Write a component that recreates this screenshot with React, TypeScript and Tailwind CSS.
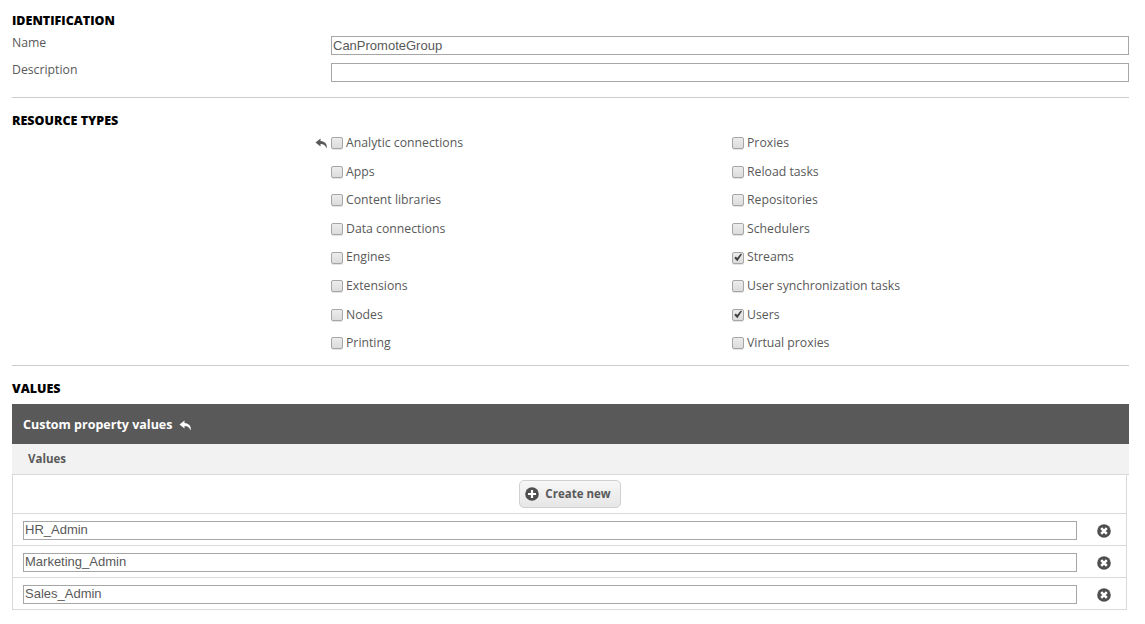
const FONT = "font-['Open_Sans',sans-serif]";

const leftTypes = [
  { label: "Analytic connections", checked: false, undo: true },
  { label: "Apps", checked: false },
  { label: "Content libraries", checked: false },
  { label: "Data connections", checked: false },
  { label: "Engines", checked: false },
  { label: "Extensions", checked: false },
  { label: "Nodes", checked: false },
  { label: "Printing", checked: false },
];

const rightTypes = [
  { label: "Proxies", checked: false },
  { label: "Reload tasks", checked: false },
  { label: "Repositories", checked: false },
  { label: "Schedulers", checked: false },
  { label: "Streams", checked: true },
  { label: "User synchronization tasks", checked: false },
  { label: "Users", checked: true },
  { label: "Virtual proxies", checked: false },
];

const values = ["HR_Admin", "Marketing_Admin", "Sales_Admin"];

function UndoIcon({ className }: { className: string }) {
  return (
    <svg viewBox="0 0 13 11" className={className} fill="currentColor">
      <path d="M5.5 0.5 L0.5 4.5 L5.5 8.5 V6 C8.5 6 10.5 7.2 11.5 10.5 C12.8 6.5 10 3.2 5.5 3 Z" />
    </svg>
  );
}

function Checkbox({ checked }: { checked: boolean }) {
  return (
    <span className="relative flex h-3 w-3 shrink-0 items-center justify-center rounded-[2px] border border-[#a6a6a6] bg-gradient-to-b from-[#ececec] to-[#dcdcdc] shadow-[0_1px_0_#e4e4e4]">
      {checked && (
        <svg viewBox="0 0 12 12" className="h-[11px] w-[11px] text-[#404040]" fill="currentColor">
          <path d="M1.5 6.5 L3.4 4.8 L5 6.6 L9.4 1.2 L10.8 2.2 L5.2 10.6 Z" />
        </svg>
      )}
    </span>
  );
}

function TypeRow({ label, checked, undo }: { label: string; checked: boolean; undo?: boolean }) {
  return (
    <div className="relative flex h-[28.6px] items-center gap-[3px]">
      {undo && <UndoIcon className="absolute left-[-16px] top-[9px] h-[11px] w-[13px] text-[#595959]" />}
      <Checkbox checked={checked} />
      <span className="text-[12.25px] text-[#595959]">{label}</span>
    </div>
  );
}

function Heading({ children }: { children: string }) {
  return <h2 className="text-[12.5px] font-extrabold leading-4 text-black">{children}</h2>;
}

function TextBox({ value }: { value: string }) {
  return (
    <input
      readOnly
      value={value}
      className="h-[19px] w-full border border-[#a6a6a6] bg-white px-[1px] font-['Liberation_Sans',sans-serif] text-[13px] text-[#595959] outline-none"
    />
  );
}

export default function App() {
  return (
    <div className={`${FONT} h-[624px] w-[1145px] overflow-hidden bg-white pl-3 pr-4 pt-[13px]`}>
      <Heading>IDENTIFICATION</Heading>
      <div className="mt-[7px] grid grid-cols-[319px_1fr] gap-y-2">
        <label className="text-[12.25px] leading-[13px] text-[#595959]">Name</label>
        <TextBox value="CanPromoteGroup" />
        <label className="text-[12.25px] leading-[13px] text-[#595959]">Description</label>
        <TextBox value="" />
      </div>

      <div className="mt-[15px] border-t border-[#cccccc]" />

      <div className="mt-[15px]">
        <Heading>RESOURCE TYPES</Heading>
      </div>
      <div className="grid grid-cols-[319px_401px_1fr]">
        <div />
        <div>
          {leftTypes.map((t) => (
            <TypeRow key={t.label} {...t} />
          ))}
        </div>
        <div>
          {rightTypes.map((t) => (
            <TypeRow key={t.label} {...t} />
          ))}
        </div>
      </div>

      <div className="mt-[7px] border-t border-[#cccccc]" />

      <div className="mt-[15px]">
        <Heading>VALUES</Heading>
      </div>

      <div className="mt-[7px] flex h-10 items-center gap-[7px] bg-[#595959] pl-[11px] pt-[3px] text-[12.5px] font-bold text-white">
        Custom property values
        <UndoIcon className="h-[11px] w-[13px] text-white" />
      </div>
      <div className="flex h-[31px] items-center border-b border-[#d9d9d9] bg-[#f2f2f2] pl-4 text-[11.5px] font-bold text-[#595959]">
        Values
      </div>
      <div className="mr-[2px] border-x border-b border-[#d9d9d9]">
        <div className="flex h-[38px] items-center justify-center">
          <button
            type="button"
            className="flex h-7 w-[102px] items-center justify-center gap-[6px] rounded-[5px] border border-[#d0d0d0] bg-gradient-to-b from-[#f7f7f7] to-[#e6e6e6] pr-[3px] text-[11.5px] font-bold text-[#595959]"
          >
            <svg viewBox="0 0 14 14" className="h-[14px] w-[14px]">
              <circle cx="7" cy="7" r="6.8" fill="#4f4f4f" />
              <path d="M7 3v8M3 7h8" stroke="#fff" strokeWidth="2.2" />
            </svg>
            Create new
          </button>
        </div>
        {values.map((v) => (
          <div key={v} className="flex h-8 items-center border-t border-[#d9d9d9] pb-[2px] pl-[10px]">
            <div className="w-[1054px]">
              <TextBox value={v} />
            </div>
            <svg viewBox="0 0 14 14" className="ml-[20px] mt-[5px] h-[14px] w-[14px]">
              <circle cx="7" cy="7" r="6.8" fill="#4f4f4f" />
              <path d="M4.2 4.2l5.6 5.6M9.8 4.2l-5.6 5.6" stroke="#fff" strokeWidth="2.6" />
            </svg>
          </div>
        ))}
      </div>
    </div>
  );
}
